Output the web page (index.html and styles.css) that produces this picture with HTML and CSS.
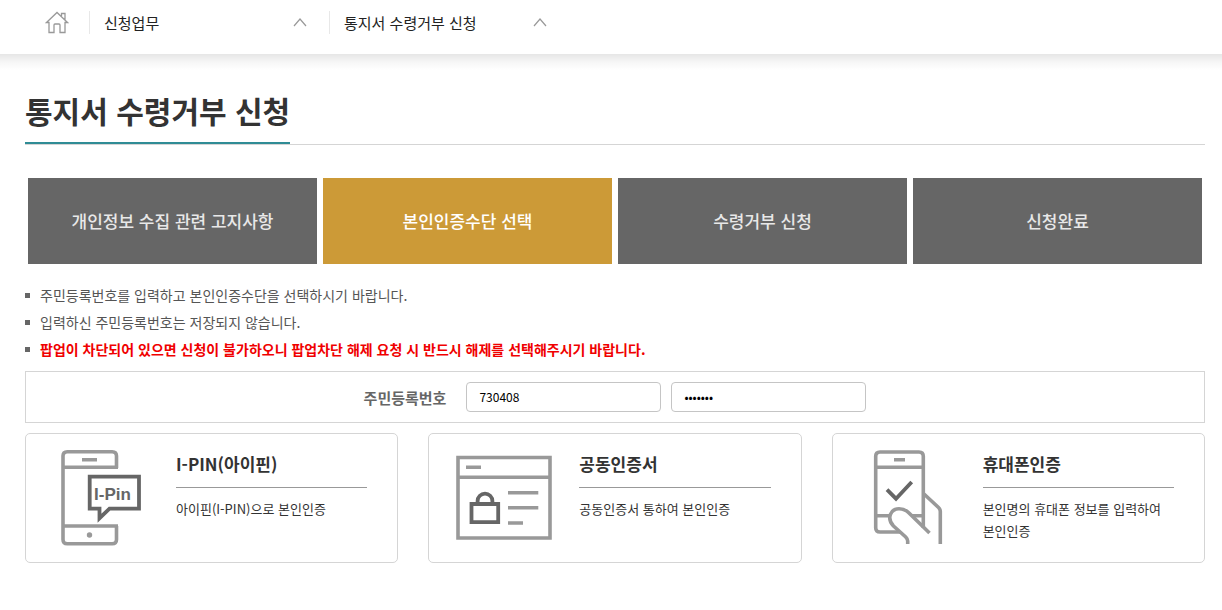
FILE: index.html
```html
<!DOCTYPE html>
<html lang="ko">
<head>
    <meta charset="UTF-8">
    <meta name="viewport" content="width=device-width, initial-scale=1">
    <title>통지서 수령거부 신청</title>
    <link rel="stylesheet" href="styles.css">
</head>
<body>
    <nav class="location">
        <a href="#" class="home" aria-label="홈">
            <svg width="24" height="24" viewBox="0 0 24 24">
                <path d="M1.5 11.5H4v10h5v-7.5q0-1 1-1h4q1 0 1 1v7.500h5v-10h2.500L12 1.500zM16.500 5V2.500H20V9"/>
            </svg>
        </a>
        <button type="button" class="depth">
            신청업무
            <svg class="arrow" width="14" height="9" viewBox="0 0 14 9"><path d="M1 8l6-7 6 7"/></svg>
        </button>
        <button type="button" class="depth">
            통지서 수령거부 신청
            <svg class="arrow" width="14" height="9" viewBox="0 0 14 9"><path d="M1 8l6-7 6 7"/></svg>
        </button>
    </nav>

    <main class="content">
        <div class="title">
            <h1>통지서 수령거부 신청</h1>
        </div>

        <ol class="steps">
            <li>개인정보 수집 관련 고지사항</li>
            <li class="on">본인인증수단 선택</li>
            <li>수령거부 신청</li>
            <li>신청완료</li>
        </ol>

        <ul class="notice">
            <li>주민등록번호를 입력하고 본인인증수단을 선택하시기 바랍니다.</li>
            <li>입력하신 주민등록번호는 저장되지 않습니다.</li>
            <li><strong>팝업이 차단되어 있으면 신청이 불가하오니 팝업차단 해제 요청 시 반드시 해제를 선택해주시기 바랍니다.</strong></li>
        </ul>

        <form class="jumin">
            <label for="jumin1">주민등록번호</label>
            <input type="text" id="jumin1" maxlength="6" value="730408">
            <input type="password" id="jumin2" maxlength="7" value="1234567" aria-label="주민등록번호 뒷자리">
        </form>

        <div class="auth">
            <a href="#" class="card">
                <svg width="150" height="128" viewBox="0 0 150 128">
                    <g class="light">
                        <path d="M92 33.3H37M90.500 34V22q0-4.300-4.300-4.300H41.300q-4.300 0-4.300 4.300v83.400q0 4.300 4.300 4.300h44.900q4.300 0 4.300-4.300V92M92 92H37M56 25.700h15"/>
                    </g>
                    <circle class="dot" cx="63.500" cy="101" r="2.700"/>
                    <path class="dark" d="M63.700 42.700H113v32H83.500l-10 9.500v-9.500h-9.800z"/>
                    <text x="68" y="66">I-Pin</text>
                </svg>
                <div class="txt">
                    <h2>I-PIN(아이핀)</h2>
                    <p>아이핀(I-PIN)으로 본인인증</p>
                </div>
            </a>
            <a href="#" class="card">
                <svg width="150" height="128" viewBox="0 0 150 128">
                    <g class="light">
                        <path d="M29 23.500h92v80.500H29zM29 43.300h92M37 33.300h15M79 58.700h30.300M79 73.700h30.300M79 89h15"/>
                    </g>
                    <path class="dark" d="M42.500 70h26.700v18.200H42.500zM48.600 70v-3a7.400 7.400 0 0 1 14.800 0v3"/>
                </svg>
                <div class="txt">
                    <h2>공동인증서</h2>
                    <p>공동인증서 통하여 본인인증</p>
                </div>
            </a>
            <a href="#" class="card">
                <svg width="150" height="128" viewBox="0 0 150 128">
                    <g class="light">
                        <path d="M67 98H47q-4.300 0-4.300-4.300V22.300Q42.700 18 47 18h39q4.300 0 4.300 4.300V94M42.700 33.300h47.600M61 25.700h11M42.700 81.700H58M79 81.700h11.300"/>
                        <path d="M74.700 110v-3q0-2-2-4L60.500 92C53 84 58 74.700 66 74.700c4.500 0 7 1.300 10 4.300l20.500 20"/>
                        <path d="M91 60l14.500 13.500q1.800 1.800 1.800 4V110"/>
                    </g>
                    <path class="dark" d="M54 55.700l9 9L78.700 48"/>
                </svg>
                <div class="txt">
                    <h2>휴대폰인증</h2>
                    <p>본인명의 휴대폰 정보를 입력하여 본인인증</p>
                </div>
            </a>
        </div>
    </main>
</body>
</html>
```

FILE: styles.css
```css
* {
    box-sizing: border-box;
}

body, h1, h2, p, ul, ol {
    margin: 0;
    padding: 0;
}

body {
    font-family: 'Noto Sans CJK KR', sans-serif;
    font-size: 14px;
    color: #333;
    background: #fff;
}

ul, ol {
    list-style: none;
}

a {
    color: inherit;
    text-decoration: none;
}

svg {
    display: block;
    flex: none;
    fill: none;
}

/* 현재 위치 */
.location {
    display: flex;
    height: 54px;
    padding: 11px 45px 20px;
}

.home {
    margin-right: 20px;
}

.home svg {
    stroke: #999;
    stroke-width: 1.3;
}

.depth {
    display: flex;
    align-items: center;
    justify-content: space-between;
    width: 240px;
    height: 23px;
    padding: 0 22px 0 14px;
    border: 0;
    border-left: 1px solid #e8e8e8;
    background: none;
    font-family: inherit;
    font-size: 15px;
    color: #222;
    cursor: pointer;
}

.arrow {
    stroke: #999;
    stroke-width: 1.2;
}

.content {
    padding: 32px 17px 40px 25px;
    background: linear-gradient(#e6e6e6, #f6f6f6 8px, #fff 16px);
}

.title {
    display: flex;
    border-bottom: 1px solid #d5d5d5;
}

.title h1 {
    height: 58px;
    border-bottom: 2px solid #2f8c95;
    font-size: 30px;
    line-height: 48px;
}

/* 진행 단계 */
.steps {
    display: flex;
    gap: 6px;
    margin: 33px 3px 18px;
}

.steps li {
    flex: 1;
    background: #666;
    color: #e8e8e8;
    font-size: 17px;
    font-weight: 500;
    line-height: 86px;
    text-align: center;
}

.steps .on {
    background: #cc9a37;
    color: #fff;
}

.notice {
    margin-bottom: 8px;
    color: #555;
}

.notice li {
    display: flex;
    align-items: center;
    gap: 10px;
    line-height: 27px;
}

.notice li::before {
    content: "";
    width: 5px;
    height: 5px;
    background: #666;
}

.notice strong {
    color: #f00000;
}

.jumin {
    display: flex;
    align-items: center;
    justify-content: center;
    gap: 10px;
    padding: 10px;
    border: 1px solid #d5d5d5;
}

.jumin label {
    margin-right: 10px;
    font-size: 15px;
    font-weight: bold;
    color: #666;
}

.jumin input {
    width: 195px;
    height: 30px;
    padding: 0 12px 2px;
    border: 1px solid #c5c5c5;
    border-radius: 4px;
    font-family: inherit;
    font-size: 12px;
    color: #000;
}

/* 인증수단 */
.auth {
    display: grid;
    grid-template-columns: repeat(3, 1fr);
    gap: 30px;
    margin-top: 10px;
}

.card {
    display: flex;
    min-height: 130px;
    padding-right: 30px;
    border: 1px solid #d5d5d5;
    border-radius: 5px;
}

.txt {
    flex: 1;
    padding-top: 14px;
}

.card h2 {
    padding-bottom: 7px;
    border-bottom: 1px solid #999;
    font-size: 17px;
    line-height: 32px;
}

.card p {
    padding-top: 10px;
    font-size: 13px;
    line-height: 22px;
}

.light {
    stroke: #999;
    stroke-width: 3.6;
}

.dark {
    stroke: #666;
    stroke-width: 3.8;
}

.dot {
    fill: #999;
}

.card text {
    fill: #666;
    font-family: 'Liberation Sans', sans-serif;
    font-size: 17px;
    font-weight: bold;
}
```
